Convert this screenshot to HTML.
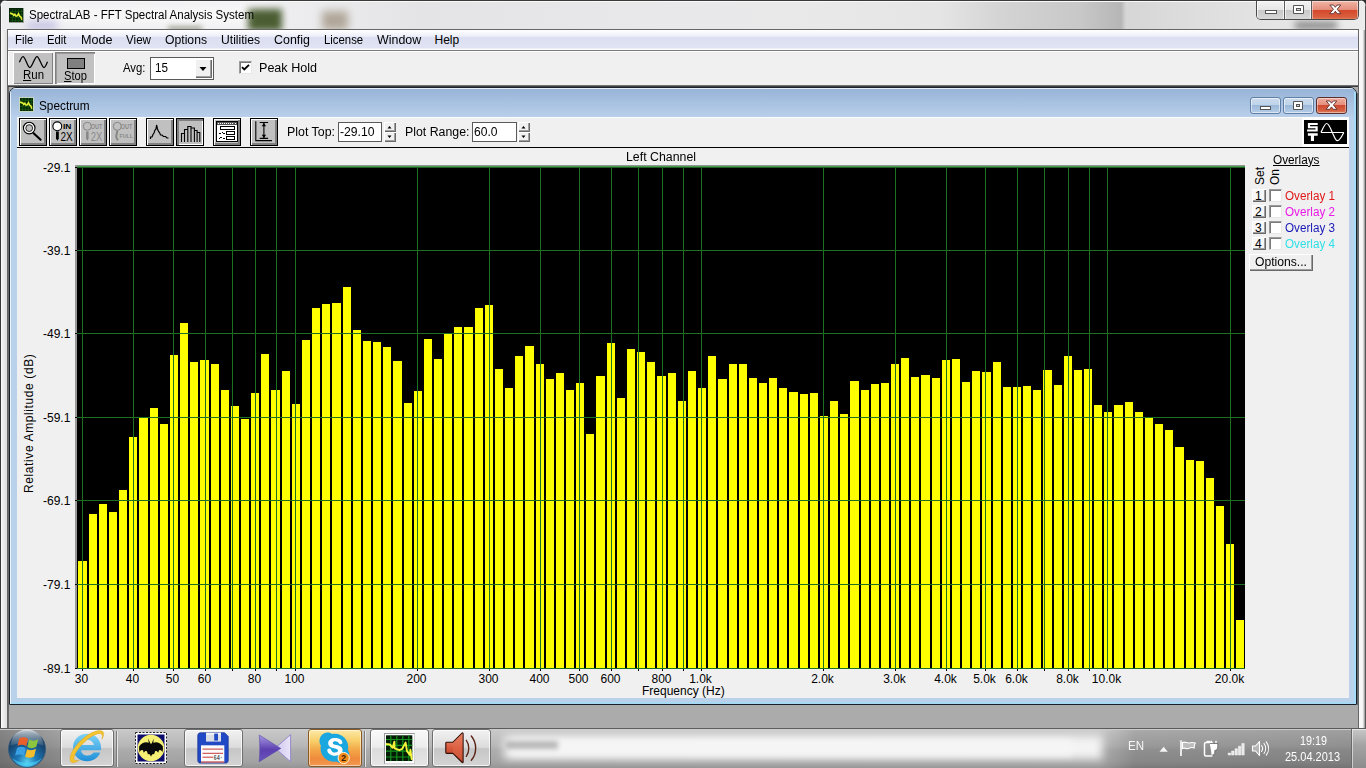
<!-- DOMAINTAG -->
<!DOCTYPE html>
<html><head><meta charset="utf-8"><title>SpectraLAB</title>
<style>
*{box-sizing:border-box;margin:0;padding:0}
html,body{width:1366px;height:768px;overflow:hidden;background:#ababab}
body{position:relative;font-family:"Liberation Sans",sans-serif;font-size:12px}
.abs{position:absolute;display:block}
.t{position:absolute;white-space:pre;transform-origin:0 0;font-family:"Liberation Sans",sans-serif}
.t u{text-decoration:underline;text-underline-offset:1px}
/* outer window */
#frame{left:0;top:0;width:1366px;height:728px;background:#e7e7e9;border-radius:7px 7px 0 0;overflow:hidden}
#glass{left:0;top:0;width:1366px;height:30px;background:linear-gradient(90deg,#ececee 0,#f0f0f2 250px,#e4e4e6 420px,#e8e8ea 640px,#e9e9ea 800px,#e5e5e6 940px,#d4d4d5 1000px,#c8c8c9 1080px,#b6b6b7 1121px,#d6d6d7 1126px,#dededf 1200px,#e6e6e7 1300px,#ececec 1366px)}
#client{left:8px;top:30px;width:1350px;height:698px;background:#ababab}
#menubar{left:8px;top:30px;width:1350px;height:19px;background:linear-gradient(180deg,#ffffff 0,#f4f5fb 20%,#e9ecf8 35%,#dbdff1 39%,#dfe3f3 92%,#eef0f8 95%)}
#toolbar{left:8px;top:51px;width:1350px;height:34px;background:#f0f0f0}
.btn{background:#c0c0c0}
.raised{box-shadow:inset 1px 1px 0 #fff, inset -1px -1px 0 #808080}
.sunken{box-shadow:inset 1px 1px 0 #808080, inset -1px -1px 0 #fff}
/* child window */
#child{left:9px;top:87px;width:1348px;height:618px;border:1px solid #1a2029;border-radius:7px 7px 1px 1px;background:#b9d1ea;overflow:hidden}
#ctitle{left:0;top:0;width:1346px;height:29px;background:linear-gradient(180deg,#96b3d6 0,#a7c1e0 50%,#b9cfea 100%)}
#cclient{left:17px;top:117px;width:1332px;height:581px;background:#f0f0f0;border-top:1px solid #fcfcfc}
.tb{width:29px;height:29px;border:1px solid #000;background:#c0c0c0}
.tb i{position:absolute;left:0;top:0;right:0;bottom:0;box-shadow:inset 1px 1px 0 #fff, inset -2px -2px 0 #808080;display:block}
.tb.down i{box-shadow:inset 2px 2px 0 #808080, inset -1px -1px 0 #fff}
.tb svg{position:absolute;left:0;top:0}
.edit{background:#fff;border:1px solid #5a5a5a}
.cb{width:13px;height:13px;background:#fff;border:1px solid #9a9a9a;border-right-color:#e8e8e8;border-bottom-color:#e8e8e8;box-shadow:inset 1px 1px 0 #7a7a7a}
.sb{background:#f0f0f0;box-shadow:inset 1px 1px 0 #fff, inset -1px -1px 0 #696969, inset -2px -2px 0 #a0a0a0}
/* taskbar */
#taskbar{left:0;top:728px;width:1366px;height:40px;background:linear-gradient(180deg,#5a5a5a 0,#5a5a5a 1px,#cdcdcd 1px,#c2c2c2 3px,#b0b0b0 45%,#a4a4a4 55%,#9a9a9a 85%,#8a8a8a 100%)}
.tbtn{top:729px;height:38px;border:1px solid #6f6f6f;border-radius:3px;background:linear-gradient(180deg,#f2f2f2 0,#dcdcdc 48%,#c6c6c6 52%,#d4d4d4 100%);box-shadow:inset 0 0 0 1px rgba(255,255,255,.75)}
</style></head><body>

<!-- OUTER WINDOW -->
<div class="abs" style="left:0;top:0;width:1366px;height:10px;background:#2e2e2e"></div>
<div id="frame" class="abs">
  <div id="glass" class="abs"></div>
  <!-- blurred desktop blobs behind glass -->
  <div class="abs" style="left:24px;top:5px;width:232px;height:20px;background:#fff;filter:blur(6px);opacity:.55"></div>
  <div class="abs" style="left:248px;top:9px;width:34px;height:22px;background:#2f4512;filter:blur(3.500px);opacity:.85"></div>
  <div class="abs" style="left:168px;top:26px;width:34px;height:5px;background:#5a5a40;filter:blur(2.500px);opacity:.5"></div>
  <div class="abs" style="left:322px;top:11px;width:26px;height:19px;background:#8a7a62;filter:blur(4px);opacity:.6"></div>
  <div class="abs" style="left:27px;top:21px;width:30px;height:9px;background:#8a86d0;filter:blur(4px);opacity:.45"></div>
  <div class="abs" style="left:1295px;top:22px;width:42px;height:7px;background:#555;filter:blur(3.500px);opacity:.7"></div>
  <!-- frame edges -->
  <div class="abs" style="left:0;top:0;width:1366px;height:1px;background:#3a3a3a"></div>
  <div class="abs" style="left:0;top:1px;width:1366px;height:1px;background:#fafafa"></div>
  <div class="abs" style="left:0;top:0;width:1px;height:728px;background:#3a3a3a"></div>
  <div class="abs" style="left:1px;top:4px;width:1px;height:724px;background:#fafafa"></div>
  <div class="abs" style="left:1365px;top:0;width:1px;height:728px;background:#555"></div>
  <div class="abs" style="left:1359px;top:30px;width:6px;height:698px;background:linear-gradient(90deg,#fafafa 0,#f4f4f4 4px,#d4d4d4 4px,#d4d4d4 5px,#a8a8a8 5px)"></div>
  <div class="abs" style="left:2px;top:30px;width:5px;height:698px;background:linear-gradient(90deg,#f2f2f2,#dedede)"></div>
  <!-- client border -->
  <div class="abs" style="left:7px;top:29px;width:1352px;height:699px;background:#666"></div>
</div>
<!-- title icon -->
<svg class="abs" style="left:9px;top:8px" width="15" height="15" viewBox="0 0 15 15"><rect width="15" height="15" fill="#9aa39a"/><rect x="0" y="0" width="14" height="14" fill="#062406"/><path d="M3.5 1v13M6.5 1v13M9.5 1v13M12.5 1v13M1 3.5h13M1 6.5h13M1 9.5h13M1 12.5h13" stroke="#1a5a16" stroke-width=".6"/><path d="M1 5l3 1.2 .8 1.3 1-1.2 1.3 1.8 1.2-.2 1.2-2.3 1.2 2.6 1.3 1 .8 2.6" fill="none" stroke="#e6f23a" stroke-width="1.5"/></svg>

<div id="client" class="abs"></div>
<div class="abs" style="left:8px;top:86px;width:1px;height:642px;background:#6a6a6a"></div>
<div id="menubar" class="abs"></div>
<div class="abs" style="left:8px;top:49px;width:1350px;height:1px;background:#fcfcfc"></div>
<div class="abs" style="left:8px;top:50px;width:1350px;height:1px;background:#7c7c7c"></div>
<div id="toolbar" class="abs"></div>
<div class="abs" style="left:8px;top:51px;width:1350px;height:1px;background:#fff"></div>
<div class="abs" style="left:8px;top:51px;width:1px;height:34px;background:#fff"></div>
<div class="abs" style="left:8px;top:85px;width:1350px;height:1px;background:#707070"></div>
<div class="abs" style="left:8px;top:86px;width:1350px;height:1px;background:#404040"></div>

<!-- caption buttons outer -->
<div class="abs" style="left:1256px;top:1px;width:103px;height:19px;border:1px solid #4a4a4a;border-top:none;border-radius:0 0 5px 5px;overflow:hidden;background:#ddd">
  <div class="abs" style="left:0;top:0;width:28px;height:19px;background:linear-gradient(180deg,#f3f3f3 0,#e6e6e6 45%,#c9c9c9 50%,#d9d9d9 100%);border-right:1px solid #5a5a5a;box-shadow:inset 0 0 0 1px rgba(255,255,255,.7)"></div>
  <div class="abs" style="left:28px;top:0;width:27px;height:19px;background:linear-gradient(180deg,#f3f3f3 0,#e6e6e6 45%,#c9c9c9 50%,#d9d9d9 100%);border-right:1px solid #5a5a5a;box-shadow:inset 0 0 0 1px rgba(255,255,255,.7)"></div>
  <div class="abs" style="left:55px;top:0;width:46px;height:19px;background:linear-gradient(180deg,#f0b5a6 0,#e58e7b 45%,#d4482c 50%,#d9603f 85%,#e58a66 100%);box-shadow:inset 0 0 0 1px rgba(255,255,255,.45)"></div>
  <svg class="abs" style="left:0;top:-1px" width="101" height="19" viewBox="0 0 101 19">
    <rect x="8.5" y="10.5" width="11" height="3" fill="#fff" stroke="#555" stroke-width="1"/>
    <path d="M36.5 5.5h10v8h-10z" fill="#fff" stroke="#555"/><rect x="39.5" y="8.5" width="4" height="2" fill="#d8d8d8" stroke="#555"/>
    <path d="M72.8 5h3.8l1.700 2.300 1.700-2.300h3.800l-3.600 4.200 3.800 4.500h-3.900l-1.800-2.500-1.800 2.500h-3.900l3.800-4.500z" fill="#fff" stroke="#5e2f2a" stroke-width=".9"/>
  </svg>
</div>

<!-- main toolbar: Run / Stop -->
<div class="abs btn raised" style="left:13px;top:52px;width:40px;height:32px"></div>
<svg class="abs" style="left:13px;top:52px" width="40" height="32" viewBox="0 0 40 32"><path d="M6.400 10.300C7.600 7.300 8.800 4.500 10 4.500 12.300 4.500 14.500 15.500 16.800 15.500 19.200 15.500 21.600 4.500 24 4.500 26.300 4.500 28.700 15.500 31 15.500 32.200 15.500 33.400 12.600 34.500 9.800" fill="none" stroke="#000" stroke-width="1.250"/></svg>
<div class="abs btn" style="left:55px;top:52px;width:40px;height:32px;box-shadow:inset 1px 1px 0 #808080, inset 2px 2px 0 #9a9a9a, inset -1px -1px 0 #fff"></div>
<div class="abs" style="left:67px;top:58px;width:18px;height:11px;background:#808080;border:1px solid #000"></div>

<!-- Avg combo -->
<div class="abs edit" style="left:150px;top:57px;width:64px;height:23px"></div>
<div class="abs" style="left:195px;top:59px;width:17px;height:19px;background:#f0f0f0;box-shadow:inset 1px 1px 0 #fff, inset -1px -1px 0 #696969, inset -2px -2px 0 #a0a0a0"></div>
<svg class="abs" style="left:195px;top:59px" width="17" height="19"><path d="M4.5 8h7l-3.5 4z" fill="#000"/></svg>
<!-- Peak hold checkbox -->
<div class="abs cb" style="left:239px;top:61px"></div>
<svg class="abs" style="left:239px;top:61px" width="13" height="13"><path d="M3 6.2l2.3 2.3L10 3.8" fill="none" stroke="#000" stroke-width="1.9"/></svg>

<!-- CHILD WINDOW -->
<div id="child" class="abs">
  <div id="ctitle" class="abs"></div>
  <div class="abs" style="left:0;top:0;width:1346px;height:1px;background:rgba(255,255,255,.75)"></div>
  <div class="abs" style="left:0;top:0;width:1px;height:616px;background:rgba(255,255,255,.75)"></div>
  <div class="abs" style="left:1344px;top:4px;width:2px;height:612px;background:#a6dcf8"></div>
  <div class="abs" style="left:1px;top:614px;width:1345px;height:2px;background:#a6d8f4"></div>
</div>
<!-- child caption buttons -->
<div class="abs" style="left:1250px;top:97px;width:31px;height:17px;border:1px solid #5f7fa6;border-radius:3px;background:linear-gradient(180deg,#cddcee 0,#bfd3ea 45%,#9db9da 50%,#b4cce6 100%);box-shadow:inset 0 0 0 1px rgba(255,255,255,.55)"></div>
<div class="abs" style="left:1283px;top:97px;width:31px;height:17px;border:1px solid #5f7fa6;border-radius:3px;background:linear-gradient(180deg,#cddcee 0,#bfd3ea 45%,#9db9da 50%,#b4cce6 100%);box-shadow:inset 0 0 0 1px rgba(255,255,255,.55)"></div>
<div class="abs" style="left:1316px;top:97px;width:31px;height:17px;border:1px solid #5b2f2f;border-radius:3px;background:linear-gradient(180deg,#efaea0 0,#e48f7e 45%,#cf4a30 50%,#d46243 85%,#e08a68 100%);box-shadow:inset 0 0 0 1px rgba(255,255,255,.4)"></div>
<svg class="abs" style="left:1250px;top:97px" width="97" height="17" viewBox="0 0 97 17">
  <rect x="10.5" y="9.5" width="10" height="3" fill="#fff" stroke="#555"/>
  <path d="M43.5 4.500h9v8h-9z" fill="#fff" stroke="#555"/><rect x="46.500" y="7.500" width="3" height="2" fill="#ccd" stroke="#555"/>
  <path d="M76.200 4h3.600l1.700 2.200 1.700-2.200h3.600l-3.400 4 3.600 4.300h-3.700l-1.800-2.400-1.800 2.400h-3.700l3.600-4.300z" fill="#fff" stroke="#5e2f2a" stroke-width=".9"/>
</svg>
<!-- child icon -->
<svg class="abs" style="left:19px;top:97px" width="15" height="15" viewBox="0 0 15 15"><rect width="15" height="15" fill="#c7d6c0"/><rect x="1" y="1" width="13" height="13" fill="#082d06"/><path d="M3.5 1v13M6.5 1v13M9.5 1v13M12.5 1v13M1 3.500h13M1 6.500h13M1 9.500h13M1 12.500h13" stroke="#1a5a16" stroke-width=".6"/><path d="M1 5l3 1.200 .8 1.300 1-1.200 1.300 1.800 1.200-.2 1.200-2.300 1.200 2.600 1.300 1 .8 2.600" fill="none" stroke="#e6f23a" stroke-width="1.500"/></svg>

<div class="abs" style="left:1357px;top:93px;width:1px;height:612px;background:#62676e"></div>
<div id="cclient" class="abs"></div>
<div class="abs" style="left:17px;top:147px;width:1332px;height:1px;background:#000"></div>

<!-- child toolbar buttons -->
<div class="abs tb" style="left:19px;top:118px;width:28px;height:28px"><i></i>
<svg width="26" height="26" viewBox="1 1 26 26"><circle cx="10.200" cy="10.100" r="5.800" fill="#d8d8d8" stroke="#000" stroke-width="1.100"/><circle cx="10.200" cy="10.100" r="4.300" fill="none" stroke="#fff" stroke-width="1.200"/><circle cx="10.200" cy="10.100" r="3.400" fill="#c0c0c0" stroke="#000" stroke-width=".8"/><path d="M14.600 15.200l7 6.500" stroke="#000" stroke-width="2.100" stroke-linecap="round"/></svg></div>
<div class="abs tb" style="left:49px;top:118px;width:28px;height:28px"><i></i>
<svg width="26" height="26" viewBox="1 1 26 26"><circle cx="8.300" cy="8.300" r="4.400" fill="#fff" stroke="#000" stroke-width="1.100"/><path d="M7 13.500h2.800v7l-1.400 2.200-1.400-2.200z" fill="#000"/><text x="14" y="11.200" font-family="Liberation Sans" font-size="6.500" font-weight="700" fill="#000" textLength="8.500" lengthAdjust="spacingAndGlyphs">IN</text><text x="11.500" y="23" font-family="Liberation Sans" font-size="12.500" fill="#000" textLength="12.200" lengthAdjust="spacingAndGlyphs">2X</text></svg></div>
<div class="abs tb" style="left:79px;top:118px;width:28px;height:28px"><i></i>
<svg width="26" height="26" viewBox="1 1 26 26"><circle cx="8.300" cy="8.300" r="4" fill="none" stroke="#868686" stroke-width="1"/><path d="M7.100 13.500h2.500v7l-1.250 2.200-1.250-2.200z" fill="#868686"/><text x="11.800" y="11.200" font-family="Liberation Sans" font-size="6.500" font-weight="700" fill="#8a8a8a" textLength="11.500" lengthAdjust="spacingAndGlyphs">OUT</text><text x="11.800" y="23" font-family="Liberation Sans" font-size="12.500" fill="#8a8a8a" textLength="11.500" lengthAdjust="spacingAndGlyphs">2X</text></svg></div>
<div class="abs tb" style="left:109px;top:118px;width:28px;height:28px"><i></i>
<svg width="26" height="26" viewBox="1 1 26 26"><circle cx="8.300" cy="8.300" r="4" fill="none" stroke="#868686" stroke-width="1"/><path d="M8.300 12.500c0 3-1.300 4-1 6.500.2 1.500 1 2.500 1.800 3.200" fill="none" stroke="#868686" stroke-width="2"/><text x="11.800" y="11.200" font-family="Liberation Sans" font-size="6.500" font-weight="700" fill="#8a8a8a" textLength="11.500" lengthAdjust="spacingAndGlyphs">OUT</text><text x="10.500" y="20" font-family="Liberation Sans" font-size="6.200" font-weight="700" fill="#8a8a8a" textLength="13.500" lengthAdjust="spacingAndGlyphs">FULL</text></svg></div>
<div class="abs tb" style="left:146px;top:118px;width:28px;height:28px"><i></i>
<svg width="26" height="26" viewBox="1 1 26 26"><path d="M4.500 21v-2h1.500l1-2.500 1-1.500 1-3 1-1 .6-4 .9 4 1 2.500 1 1 1 2.500h1.500l1.500 1.500h2l1.500 1.500h1.500" fill="none" stroke="#000" stroke-width="1.200"/></svg></div>
<div class="abs tb down" style="left:176px;top:118px;width:28px;height:28px"><i></i>
<svg width="26" height="26" viewBox="1 1 26 26"><path d="M5.500 24v-8.500h3v8.500M8.500 15.500v-4h3.300v12.500M11.800 11.500v-3h3.200v15.500M15 10h3.400v14M18.400 12.500h2.700v11.500M21.100 14.500h2.700v9.500" fill="none" stroke="#000" stroke-width="1.100"/></svg></div>
<div class="abs tb" style="left:213px;top:118px;width:28px;height:28px"><i></i>
<svg width="26" height="26" viewBox="1 1 26 26" shape-rendering="crispEdges"><rect x="3.500" y="3.500" width="21" height="20" fill="#fff" stroke="#000"/><rect x="4" y="4" width="20" height="2.500" fill="#555"/><path d="M5 5h1M7 5h1M9 5h1M11 5h1M13 5h1M15 5h1M17 5h1M19 5h1M22 5h1" stroke="#fff"/><rect x="7.500" y="8.500" width="14" height="3" fill="#fff" stroke="#000"/><rect x="13.500" y="13.500" width="8" height="3" fill="#fff" stroke="#000"/><rect x="13.500" y="18.500" width="8" height="3" fill="#fff" stroke="#000"/><path d="M6 15h2M9 14h1M10 15h2M6 20h1M7 19h2M10 20h2" stroke="#000"/></svg></div>
<div class="abs tb" style="left:250px;top:118px;width:28px;height:28px"><i></i>
<svg width="26" height="26" viewBox="1 1 26 26"><path d="M5.800 3.300v19.300h16.200" fill="none" stroke="#000" stroke-width="1.100"/><path d="M9.700 4.500h8.400M9.700 20.400h8.400M13.900 5v15" fill="none" stroke="#000" stroke-width="1.100"/><path d="M13.900 5l-2.200 3.300h4.400zM13.900 20l-2.200-3.300h4.400z" fill="#000"/></svg></div>

<!-- Plot Top / Plot Range controls -->
<div class="abs edit" style="left:338px;top:122px;width:44px;height:20px"></div>
<div class="abs sb" style="left:384px;top:122px;width:12px;height:10px"></div>
<div class="abs sb" style="left:384px;top:132px;width:12px;height:10px"></div>
<svg class="abs" style="left:384px;top:122px" width="12" height="20"><path d="M3.500 6.500h4l-2-2.500zM3.500 13.500h4l-2 2.500z" fill="#000"/></svg>
<div class="abs edit" style="left:472px;top:122px;width:45px;height:20px"></div>
<div class="abs sb" style="left:518px;top:122px;width:12px;height:10px"></div>
<div class="abs sb" style="left:518px;top:132px;width:12px;height:10px"></div>
<svg class="abs" style="left:518px;top:122px" width="12" height="20"><path d="M3.500 6.500h4l-2-2.500zM3.500 13.500h4l-2 2.500z" fill="#000"/></svg>

<!-- logo -->
<div class="abs" style="left:1302px;top:118px;width:47px;height:29px;background:#fdfdfd"></div>
<svg class="abs" style="left:1304px;top:120px" width="43" height="24" viewBox="0 0 43 24"><rect width="43" height="24" fill="#000"/>
<path d="M4.400 3h9.300v2h-9.300zM3.900 3h2.200v5.300h-2.200zM3.900 6.300h9.800v2h-9.800zM11.500 6.300h2.200v5.200h-2.200zM3.100 9.500h10.600v2h-10.600zM3.900 13.200h9.800v2.600h-9.800zM6.900 13.200h3.100v7.800h-3.100z" fill="#fff"/>
<path d="M17 12.500H39.800" stroke="#fff" stroke-width="1"/>
<path d="M17 12.400C19 8.400 20.800 3.500 22.600 3.500 25 3.500 26.500 8.800 28.300 12.400 30 15.800 31.500 20.700 33.400 20.700 35.500 20.700 37.800 16.400 39.800 12.400" fill="none" stroke="#fff" stroke-width="1.200"/></svg>

<svg class=abs style="left:72px;top:165px" width="1174" height="507" viewBox="72 165 1174 507" shape-rendering="crispEdges"><rect x="75" y="165" width="1170" height="1" fill="#8f968f"/><rect x="75" y="165" width="2" height="504" fill="#999"/><rect x="77" y="166" width="1168" height="503" fill="#000"/><path d="M78 561H87V668H78ZM89 514H97V668H89ZM99 504H107V668H99ZM109 512H117V668H109ZM119 490H127V668H119ZM129 437H137V668H129ZM139 418H148V668H139ZM150 408H158V668H150ZM160 424H168V668H160ZM170 355H178V668H170ZM180 323H188V668H180ZM190 362H198V668H190ZM200 360H209V668H200ZM211 364H219V668H211ZM221 390H229V668H221ZM231 406H239V668H231ZM241 419H249V668H241ZM251 393H259V668H251ZM261 354H269V668H261ZM271 390H280V668H271ZM282 371H290V668H282ZM292 404H300V668H292ZM302 340H310V668H302ZM312 308H320V668H312ZM322 304H330V668H322ZM332 303H341V668H332ZM343 287H351V668H343ZM353 330H361V668H353ZM363 341H371V668H363ZM373 342H381V668H373ZM383 347H391V668H383ZM393 361H402V668H393ZM404 403H412V668H404ZM414 391H422V668H414ZM424 339H432V668H424ZM434 359H442V668H434ZM444 334H452V668H444ZM454 327H462V668H454ZM464 327H473V668H464ZM475 308H483V668H475ZM485 305H493V668H485ZM495 369H503V668H495ZM505 388H513V668H505ZM515 356H523V668H515ZM525 346H534V668H525ZM536 364H544V668H536ZM546 379H554V668H546ZM556 373H564V668H556ZM566 390H574V668H566ZM576 383H584V668H576ZM586 434H594V668H586ZM596 376H605V668H596ZM607 343H615V668H607ZM617 398H625V668H617ZM627 349H635V668H627ZM637 352H645V668H637ZM647 362H655V668H647ZM657 376H666V668H657ZM668 373H676V668H668ZM678 401H686V668H678ZM688 371H696V668H688ZM698 388H706V668H698ZM708 356H716V668H708ZM718 379H727V668H718ZM729 364H737V668H729ZM739 364H747V668H739ZM749 378H757V668H749ZM759 383H767V668H759ZM769 378H777V668H769ZM779 388H787V668H779ZM789 392H798V668H789ZM800 394H808V668H800ZM810 393H818V668H810ZM820 416H828V668H820ZM830 401H838V668H830ZM840 414H848V668H840ZM850 381H859V668H850ZM861 390H869V668H861ZM871 384H879V668H871ZM881 383H889V668H881ZM891 364H899V668H891ZM901 358H909V668H901ZM911 377H919V668H911ZM921 375H930V668H921ZM932 378H940V668H932ZM942 360H950V668H942ZM952 359H960V668H952ZM962 382H970V668H962ZM972 371H980V668H972ZM982 372H991V668H982ZM993 362H1001V668H993ZM1003 387H1011V668H1003ZM1013 387H1021V668H1013ZM1023 386H1031V668H1023ZM1033 390H1041V668H1033ZM1043 370H1052V668H1043ZM1054 385H1062V668H1054ZM1064 356H1072V668H1064ZM1074 370H1082V668H1074ZM1084 369H1092V668H1084ZM1094 405H1102V668H1094ZM1104 412H1112V668H1104ZM1114 405H1123V668H1114ZM1125 402H1133V668H1125ZM1135 412H1143V668H1135ZM1145 418H1153V668H1145ZM1155 424H1163V668H1155ZM1165 430H1173V668H1165ZM1175 447H1184V668H1175ZM1186 460H1194V668H1186ZM1196 461H1204V668H1196ZM1206 478H1214V668H1206ZM1216 506H1224V668H1216ZM1226 544H1234V668H1226ZM1236 620H1244V668H1236Z" fill="#ffff00"/><path d="M82 167h1v502h-1zM133 167h1v502h-1zM173 167h1v502h-1zM205 167h1v502h-1zM232 167h1v502h-1zM255 167h1v502h-1zM276 167h1v502h-1zM295 167h1v502h-1zM417 167h1v502h-1zM489 167h1v502h-1zM540 167h1v502h-1zM579 167h1v502h-1zM611 167h1v502h-1zM638 167h1v502h-1zM662 167h1v502h-1zM683 167h1v502h-1zM701 167h1v502h-1zM823 167h1v502h-1zM895 167h1v502h-1zM946 167h1v502h-1zM985 167h1v502h-1zM1017 167h1v502h-1zM1044 167h1v502h-1zM1068 167h1v502h-1zM1089 167h1v502h-1zM1107 167h1v502h-1zM1230 167h1v502h-1zM77 250h1168v1h-1168zM77 333h1168v1h-1168zM77 417h1168v1h-1168zM77 500h1168v1h-1168zM77 584h1168v1h-1168zM77 668h1168v1h-1168z" fill="#1d6f22"/><rect x="77" y="166" width="1168" height="1" fill="#4c9c50"/><rect x="77" y="167" width="1168" height="1" fill="#1f5f25"/><path d="M75 167h2v1h-2zM75 250h2v1h-2zM75 333h2v1h-2zM75 417h2v1h-2zM75 500h2v1h-2zM75 584h2v1h-2zM75 668h2v1h-2zM82 669h1v2h-1zM133 669h1v2h-1zM173 669h1v2h-1zM205 669h1v2h-1zM232 669h1v2h-1zM255 669h1v2h-1zM276 669h1v2h-1zM295 669h1v2h-1zM417 669h1v2h-1zM489 669h1v2h-1zM540 669h1v2h-1zM579 669h1v2h-1zM611 669h1v2h-1zM638 669h1v2h-1zM662 669h1v2h-1zM683 669h1v2h-1zM701 669h1v2h-1zM823 669h1v2h-1zM895 669h1v2h-1zM946 669h1v2h-1zM985 669h1v2h-1zM1017 669h1v2h-1zM1044 669h1v2h-1zM1068 669h1v2h-1zM1089 669h1v2h-1zM1107 669h1v2h-1zM1230 669h1v2h-1z" fill="#000"/></svg>
<!-- overlay set buttons + checkboxes -->
<div class="abs" style="left:1252px;top:189px;width:14px;height:13px;background:#f7f7f7;box-shadow:inset 1px 1px 0 #fff, inset -1px -1px 0 #696969, inset -2px -2px 0 #a0a0a0"></div>
<div class="abs" style="left:1252px;top:205px;width:14px;height:13px;background:#f7f7f7;box-shadow:inset 1px 1px 0 #fff, inset -1px -1px 0 #696969, inset -2px -2px 0 #a0a0a0"></div>
<div class="abs" style="left:1252px;top:221px;width:14px;height:13px;background:#f7f7f7;box-shadow:inset 1px 1px 0 #fff, inset -1px -1px 0 #696969, inset -2px -2px 0 #a0a0a0"></div>
<div class="abs" style="left:1252px;top:237px;width:14px;height:13px;background:#f7f7f7;box-shadow:inset 1px 1px 0 #fff, inset -1px -1px 0 #696969, inset -2px -2px 0 #a0a0a0"></div>
<div class="abs cb" style="left:1269px;top:189px"></div>
<div class="abs cb" style="left:1269px;top:205px"></div>
<div class="abs cb" style="left:1269px;top:221px"></div>
<div class="abs cb" style="left:1269px;top:237px"></div>
<div class="abs" style="left:1249px;top:254px;width:64px;height:17px;background:#f0f0f0;box-shadow:inset 1px 1px 0 #fff, inset -1px -1px 0 #696969, inset -2px -2px 0 #a0a0a0"></div>

<!-- TASKBAR -->
<div id="taskbar" class="abs"></div>
<div class="abs" style="left:0;top:730px;width:1366px;height:38px;background:linear-gradient(90deg,rgba(70,70,70,.5) 0,rgba(90,90,90,.32) 56px,rgba(255,255,255,.08) 120px,rgba(255,255,255,.1) 490px,rgba(255,255,255,.12) 1100px,rgba(50,50,50,.18) 1135px,rgba(40,40,40,.24) 1366px)"></div>
<div class="abs" style="left:0;top:728px;width:1366px;height:40px;overflow:hidden"><div class="abs" style="left:504px;top:8px;width:598px;height:23px;background:#f3f3f3;filter:blur(4.500px)"></div>
<div class="abs" style="left:512px;top:11px;width:560px;height:17px;background:#f6f6f6;filter:blur(3px);opacity:.8"></div></div>
<div class="abs" style="left:506px;top:741px;width:52px;height:8px;background:#7c7c7c;filter:blur(2.500px);opacity:.5"></div>
<!-- buttons -->
<div class="abs tbtn" style="left:60px;width:54px"></div>
<div class="abs" style="left:116px;top:731px;width:1px;height:36px;background:#7a7a7a"></div><div class="abs" style="left:117px;top:731px;width:1px;height:36px;background:#e6e6e6"></div>
<div class="abs tbtn" style="left:184px;width:59px"></div>
<div class="abs tbtn" style="left:308px;width:54px;border-color:#8a5a22;background:linear-gradient(180deg,#fbe9a8 0,#f8cf6a 30%,#f3a748 55%,#ee8a3c 80%,#f19a55 100%);box-shadow:inset 0 0 0 1px rgba(255,255,255,.5)"></div>
<div class="abs" style="left:364px;top:731px;width:1px;height:36px;background:#7a7a7a"></div><div class="abs" style="left:365px;top:731px;width:1px;height:36px;background:#e6e6e6"></div>
<div class="abs tbtn" style="left:370px;width:59px;background:linear-gradient(180deg,#fafafa 0,#ececec 48%,#dcdcdc 52%,#e6e6e6 100%)"></div>
<div class="abs tbtn" style="left:432px;width:59px"></div>
<!-- start orb -->
<svg class="abs" style="left:6px;top:728px" width="44" height="40" viewBox="0 0 44 40">
<defs><radialGradient id="og" cx="50%" cy="85%" r="75%"><stop offset="0" stop-color="#58d0ee"/><stop offset=".35" stop-color="#1e78b8"/><stop offset=".8" stop-color="#15456f"/><stop offset="1" stop-color="#0e2f4f"/></radialGradient>
<linearGradient id="oh" x1="0" y1="0" x2="0" y2="1"><stop offset="0" stop-color="#fff" stop-opacity=".75"/><stop offset="1" stop-color="#fff" stop-opacity=".08"/></linearGradient></defs>
<circle cx="21" cy="21" r="18.500" fill="url(#og)" stroke="#3a5d7c" stroke-width="1"/>
<path d="M4.500 18a16.500 16.500 0 0 1 33 0c-8-4-25-4-33 0z" fill="url(#oh)"/>
<path d="M13.200 10.500c3-1.600 6-1.500 8.800.3l-1.700 7.400c-2.800-1.800-5.800-1.900-8.800-.3z" fill="#e8602a"/>
<path d="M23.200 11.600c2.900 1.500 5.900 1.500 9-.4l-1.900 7.600c-3.100 1.800-6.100 1.800-9 .3z" fill="#8cc63e"/>
<path d="M11 20c3-1.600 6-1.500 8.800.3l-1.800 7.600c-2.800-1.800-5.800-1.900-8.800-.3z" fill="#3aa0e4"/>
<path d="M21 21.200c2.900 1.500 5.900 1.500 9-.4l-1.900 7.600c-3.100 1.800-6.100 1.800-9 .3z" fill="#f6bd2c"/>
<path d="M6 30a17.500 17.500 0 0 0 30 0c-8 6.500-22 6.500-30 0z" fill="#4fe0ff" opacity=".55"/>
</svg>
<!-- IE -->
<svg class="abs" style="left:70px;top:731px;overflow:visible" width="34" height="34" viewBox="0 0 34 34">
<defs><linearGradient id="ie" x1="0" y1="0" x2="0" y2="1"><stop offset="0" stop-color="#7fd4f7"/><stop offset="1" stop-color="#1f8fd8"/></linearGradient></defs>
<g transform="translate(17 16.500) scale(1.270) translate(-17.400 -17.400)"><path d="M17.500 6.500c6.500 0 11 4.800 11 11.300v1.700h-15.800c.4 2.600 2.400 4.200 5.200 4.200 2 0 3.600-.8 4.600-2.300h5.300c-1.500 4.200-5.300 6.800-10.200 6.800-6.600 0-11.200-4.500-11.200-10.800 0-6.300 4.600-10.900 11.100-10.900zm-4.700 9h10.100c-.4-2.500-2.300-4.100-5-4.100s-4.600 1.600-5.100 4.100z" fill="url(#ie)"/>
<path d="M5 29c-3-3 1-11 8-17.500 6-5.500 13.500-8.800 16.500-6.800 1.600 1.100 1.200 3.500-.3 6.100.6-2 .5-3.500-.6-4.100-2.200-1.300-8.400 1.800-13.600 6.800-5.600 5.400-9 11.500-7.600 13.600.6.900 2.100.8 3.900.1-2.600 1.900-5 2.800-6.300 1.800z" fill="#f4c430" stroke="#d9a520" stroke-width=".4"/></g>
</svg>
<!-- The Bat -->
<svg class="abs" style="left:135px;top:732px" width="32" height="32" viewBox="0 0 32 32">
<rect x=".5" y=".5" width="31" height="31" fill="#fff" stroke="#222" stroke-width="1" stroke-dasharray="2 1.500"/>
<rect x="2.500" y="2.500" width="27" height="27" fill="#0c0c6c"/>
<ellipse cx="16" cy="16" rx="13.400" ry="13.200" fill="#f6f074"/>
<path d="M16 12.300L14.800 10.200 13.300 6.500 13.700 10.700C11 9.500 7 10 4.200 14.200 3.900 16 4 18 4.500 20.200 5.500 18.200 7 17.500 8 18.500L8.800 20.800C9.800 19 11 18.600 12 19.500L13 22.500C14 21.500 15 22 16 24.800 17 22 18 21.500 19 22.500L20 19.500C21 18.600 22.200 19 23.200 20.800L24 18.500C25 17.500 26.500 18.200 27.500 20.200 28 18 28.100 16 27.800 14.200 25 10 21 9.500 18.300 10.700L18.700 6.500 17.200 10.200z" fill="#0a0a0a"/>
</svg>
<!-- floppy -->
<svg class="abs" style="left:197px;top:732px" width="32" height="32" viewBox="0 0 32 32">
<path d="M.8 3.500c0-1.500 1.100-2.700 2.600-2.700h24.200l3.600 3.600v24c0 1.500-1.100 2.700-2.600 2.700h-25.200c-1.500 0-2.600-1.200-2.600-2.700z" fill="#2149c6" stroke="#1a3596" stroke-width=".8"/>
<rect x="9" y=".8" width="15" height="8.800" fill="#d9dde6"/><rect x="9" y=".8" width="15" height="2" fill="#f2f2f5"/><rect x="17.200" y="1.600" width="3.800" height="7" fill="#2149c6"/>
<rect x="4" y="13.300" width="23.300" height="17.200" fill="#fbfbfb"/>
<path d="M5.500 17.100h20.500M5.500 21.300h20.500M5.500 25.200h10.500" stroke="#c83a3a" stroke-width="1"/><path d="M4 30h23.300" stroke="#c04040" stroke-width="1.200"/>
<text x="16.500" y="27.600" font-family="Liberation Mono" font-size="6.500" font-weight="700" fill="#555" textLength="9.500" lengthAdjust="spacingAndGlyphs">64·</text>
</svg>
<!-- VS -->
<svg class="abs" style="left:257px;top:733px" width="36" height="30" viewBox="0 0 36 30">
<defs><linearGradient id="vs1" x1="0" y1="0" x2="0" y2="1"><stop offset="0" stop-color="#a899e2"/><stop offset=".55" stop-color="#5c3fb0"/><stop offset="1" stop-color="#6a55bc"/></linearGradient><linearGradient id="vs2" x1="0" y1="0" x2="1" y2="0"><stop offset="0" stop-color="#cfc6ee"/><stop offset="1" stop-color="#e9e4f8"/></linearGradient></defs>
<path d="M33.600 1.600v27.100l-15.500-13.500z" fill="url(#vs2)" stroke="#8f82c8" stroke-width=".9" stroke-linejoin="round"/>
<path d="M2.200 2c0 0 .6 7 .6 13.400s-.6 13.300-.6 13.300l21.600-13.300z" fill="url(#vs1)" stroke="#5a48a8" stroke-width=".6" stroke-linejoin="round"/>
</svg>
<!-- Skype -->
<svg class="abs" style="left:318px;top:731px" width="34" height="34" viewBox="0 0 34 34">
<path d="M9.500 1.500c2 0 3.600.6 4.800 1.500 1-.2 2-.3 3-.2 7.400.3 13.200 6.300 12.900 13.600 0 .9-.2 1.800-.4 2.600.9 1.300 1.500 2.900 1.500 4.700 0 4.600-3.700 8.300-8.300 8.300-1.700 0-3.300-.5-4.600-1.400-.9.200-1.900.2-2.900.2-7.400-.3-13.200-6.400-12.900-13.700 0-.8.100-1.700.3-2.500-.9-1.300-1.400-2.900-1.400-4.600 0-4.700 3.500-8.500 8-8.500z" fill="#1aa7e0"/>
<path d="M17.200 7c-4.200 0-7 2-7 5.200 0 3.300 2.700 4.300 6 5 2.700.6 3.800 1 3.800 2.300 0 1.200-1.200 2-3 2-2 0-3.200-.9-3.900-2.600-.4-.9-1-1.400-1.900-1.400-1.100 0-1.900.8-1.900 1.800 0 2.800 3.300 5.500 7.800 5.500 4.400 0 7.500-2.100 7.500-5.700 0-3.200-2.300-4.400-6.200-5.200-2.600-.5-3.600-.9-3.600-2 0-1 1-1.700 2.600-1.700 1.700 0 2.600.7 3.300 1.900.5.800 1 1.200 1.900 1.200 1 0 1.800-.8 1.800-1.700 0-2.400-3-4.600-7.200-4.600z" fill="#fff"/>
<circle cx="25.700" cy="27" r="5.600" fill="#f08a1c" stroke="#fff3d0" stroke-width="1"/>
<text x="25.700" y="30.300" text-anchor="middle" font-family="Liberation Sans" font-size="8.500" font-weight="700" fill="#3a1a00">2</text>
</svg>
<!-- SpectraLAB task icon -->
<svg class="abs" style="left:384px;top:733px" width="31" height="31" viewBox="0 0 31 31">
<rect width="31" height="31" fill="#fdfdfd"/><path d="M0 31V0h31" fill="none" stroke="#9a9a9a" stroke-width="2"/><path d="M31 0v31H0" fill="none" stroke="#b8b8b8" stroke-width="1.200"/>
<rect x="2" y="2.300" width="26.300" height="25.700" fill="#021a06"/>
<path d="M6.800 2.300v25.700M12.800 2.300v25.700M18.800 2.300v25.700M24.800 2.300v25.700M2 6.500h26.300M2 12.300h26.300M2 18.200h26.300M2 24h26.300" stroke="#15921d" stroke-width="1.200"/>
<path d="M2 11l3.800.5 2.900 3.300 1.700-6.200.2 6.700 4.800 1.900 2.800-1.400 3.400-6.200 1.400 8.600 2.900 3.800.5-5.200 1.400 10" fill="none" stroke="#f4f43c" stroke-width="1.900" stroke-linejoin="round"/>
</svg>
<!-- speaker -->
<svg class="abs" style="left:445px;top:732px" width="34" height="32" viewBox="0 0 34 32">
<defs><linearGradient id="sp" x1="0" y1="0" x2="0" y2="1"><stop offset="0" stop-color="#f0a088"/><stop offset=".5" stop-color="#d8583c"/><stop offset="1" stop-color="#a83420"/></linearGradient></defs>
<path d="M1.700 10.200h6.300l9-9c.6-.5 1.100-.3 1.100.5v28.200c0 .8-.5 1-1.100.5l-9-9h-6.300c-.5 0-.9-.4-.9-.9v-9.400c0-.5.400-.9.900-.9z" fill="url(#sp)" stroke="#2e0e06" stroke-width="1.100" stroke-linejoin="round"/>
<path d="M8 10.500l9.300-9v27.500l-9.300-8.300z" fill="#e06a48" opacity=".55"/>
<path d="M21.300 8.300c3.300 4.300 3.300 11.800 0 16.100" fill="none" stroke="#5a2214" stroke-width="1.300" stroke-linecap="round"/>
<path d="M26.300 4c5.800 7 5.800 17.300 0 24.300" fill="none" stroke="#5a2214" stroke-width="1.400" stroke-linecap="round"/>
</svg>
<!-- tray -->
<svg class="abs" style="left:1155px;top:738px" width="120" height="22" viewBox="1155 738 120 22">
<path d="M1159.500 751.700h8.300l-4.150-5z" fill="#fff" opacity=".9"/>
<!-- flag -->
<path d="M1181 741.500v14.500" stroke="#fff" stroke-width="1.600"/><path d="M1179.700 741h2.600" stroke="#fff" stroke-width="1"/>
<path d="M1182.500 742.500c3-1.500 5 1.500 8 .3 1.500-.6 3-.3 4.800.2-1 1.500-1.400 3.200-1.200 5-2-.8-3.500-.5-5 .3-2.500 1.200-4.300-1-6.600.2z" fill="rgba(255,255,255,.35)" stroke="#fff" stroke-width="1.100"/>
<!-- power -->
<rect x="1204.500" y="742.500" width="8" height="13.500" rx="1.500" fill="none" stroke="#fff" stroke-width="1.500"/>
<rect x="1206.500" y="740.800" width="4" height="2" fill="#fff"/>
<path d="M1211.500 743v-2.200M1216 743v-2.200" stroke="#fff" stroke-width="1.400"/>
<path d="M1209.800 743.500h8v3.500c0 2-1.500 3.300-3 3.500v2.500c0 1.200-1.500 2.200-3 2.200" fill="#fff" stroke="#555" stroke-width=".7"/>
<!-- network -->
<path d="M1228.200 753h2.400v2h-2.400zM1231.600 751h2.400v4h-2.400zM1235 748.700h2.400v6.300h-2.400zM1238.400 746.200h2.400v8.800h-2.400zM1241.800 743.500h2.400v11.500h-2.400z" fill="rgba(255,255,255,.8)" stroke="#fff" stroke-width=".5"/>
<!-- volume -->
<path d="M1252.500 746h3l4-4.500v14l-4-4.500h-3z" fill="rgba(255,255,255,.35)" stroke="#fff" stroke-width="1.100" stroke-linejoin="round"/>
<path d="M1261.500 745.500c1.300 1.700 1.300 4.300 0 6M1264 743.500c2.200 2.900 2.200 7.100 0 10M1266.300 741.800c3 4 3 9.400 0 13.400" fill="none" stroke="#fff" stroke-width="1.100" stroke-linecap="round"/>
</svg>
<!-- show desktop -->
<div class="abs" style="left:1351px;top:729px;width:15px;height:39px;border-left:1px solid #6a6a6a;background:linear-gradient(180deg,#c8c8c8 0,#a4a4a4 40%,#8c8c8c 100%);box-shadow:inset 1px 1px 0 rgba(255,255,255,.55)"></div>

<span class=t style="left:28.5px;top:8.14px;font-size:12px;line-height:14px;color:#000;font-weight:400;transform:scaleX(0.9594);">SpectraLAB - FFT Spectral Analysis System</span>
<span class=t style="left:15px;top:32.84px;font-size:12px;line-height:14px;color:#000;font-weight:400;transform:scaleX(0.9460);">File</span>
<span class=t style="left:46.5px;top:32.84px;font-size:12px;line-height:14px;color:#000;font-weight:400;transform:scaleX(0.9426);">Edit</span>
<span class=t style="left:81px;top:32.84px;font-size:12px;line-height:14px;color:#000;font-weight:400;transform:scaleX(1.0489);">Mode</span>
<span class=t style="left:125.5px;top:32.84px;font-size:12px;line-height:14px;color:#000;font-weight:400;transform:scaleX(0.9691);">View</span>
<span class=t style="left:165px;top:32.84px;font-size:12px;line-height:14px;color:#000;font-weight:400;transform:scaleX(1.0155);">Options</span>
<span class=t style="left:221px;top:32.84px;font-size:12px;line-height:14px;color:#000;font-weight:400;transform:scaleX(1.0111);">Utilities</span>
<span class=t style="left:274px;top:32.84px;font-size:12px;line-height:14px;color:#000;font-weight:400;transform:scaleX(1.0350);">Config</span>
<span class=t style="left:324px;top:32.84px;font-size:12px;line-height:14px;color:#000;font-weight:400;transform:scaleX(0.9474);">License</span>
<span class=t style="left:376.5px;top:32.84px;font-size:12px;line-height:14px;color:#000;font-weight:400;transform:scaleX(1.0354);">Window</span>
<span class=t style="left:434.5px;top:32.84px;font-size:12px;line-height:14px;color:#000;font-weight:400;">Help</span>
<span class=t style="left:23px;top:67.84px;font-size:12px;line-height:14px;color:#000;font-weight:400;transform:scaleX(0.9532);"><u>R</u>un</span>
<span class=t style="left:64px;top:68.84px;font-size:12px;line-height:14px;color:#000;font-weight:400;transform:scaleX(0.9311);"><u>S</u>top</span>
<span class=t style="left:123px;top:60.84px;font-size:12px;line-height:14px;color:#000;font-weight:400;transform:scaleX(0.9455);">Avg:</span>
<span class=t style="left:155px;top:61.34px;font-size:12px;line-height:14px;color:#000;font-weight:400;transform:scaleX(0.9731);">15</span>
<span class=t style="left:259px;top:60.84px;font-size:12px;line-height:14px;color:#000;font-weight:400;transform:scaleX(1.0474);">Peak Hold</span>
<span class=t style="left:39px;top:98.84px;font-size:12px;line-height:14px;color:#000;font-weight:400;transform:scaleX(0.9833);">Spectrum</span>
<span class=t style="left:286.5px;top:125.34px;font-size:12px;line-height:14px;color:#000;font-weight:400;transform:scaleX(1.0326);">Plot Top:</span>
<span class=t style="left:340px;top:125.34px;font-size:12px;line-height:14px;color:#000;font-weight:400;transform:scaleX(1.0138);">-29.10</span>
<span class=t style="left:404.5px;top:125.34px;font-size:12px;line-height:14px;color:#000;font-weight:400;transform:scaleX(1.0284);">Plot Range:</span>
<span class=t style="left:474px;top:125.34px;font-size:12px;line-height:14px;color:#000;font-weight:400;transform:scaleX(1.0060);">60.0</span>
<span class=t style="left:626px;top:149.84px;font-size:12px;line-height:14px;color:#000;font-weight:400;transform:scaleX(1.0285);">Left Channel</span>
<span class=t style="left:642px;top:683.84px;font-size:12px;line-height:14px;color:#000;font-weight:400;">Frequency (Hz)</span>
<span class=t style="left:43px;top:161.14px;font-size:12px;line-height:14px;color:#000;font-weight:400;">-29.1</span>
<span class=t style="left:43px;top:244.14px;font-size:12px;line-height:14px;color:#000;font-weight:400;">-39.1</span>
<span class=t style="left:43px;top:327.14px;font-size:12px;line-height:14px;color:#000;font-weight:400;">-49.1</span>
<span class=t style="left:43px;top:411.14px;font-size:12px;line-height:14px;color:#000;font-weight:400;">-59.1</span>
<span class=t style="left:43px;top:494.14px;font-size:12px;line-height:14px;color:#000;font-weight:400;">-69.1</span>
<span class=t style="left:43px;top:578.14px;font-size:12px;line-height:14px;color:#000;font-weight:400;">-79.1</span>
<span class=t style="left:43px;top:662.14px;font-size:12px;line-height:14px;color:#000;font-weight:400;">-89.1</span>
<span class=t style="left:74.8px;top:671.84px;font-size:12px;line-height:14px;color:#000;font-weight:400;">30</span>
<span class=t style="left:125.8px;top:671.84px;font-size:12px;line-height:14px;color:#000;font-weight:400;">40</span>
<span class=t style="left:165.8px;top:671.84px;font-size:12px;line-height:14px;color:#000;font-weight:400;">50</span>
<span class=t style="left:197.8px;top:671.84px;font-size:12px;line-height:14px;color:#000;font-weight:400;">60</span>
<span class=t style="left:247.8px;top:671.84px;font-size:12px;line-height:14px;color:#000;font-weight:400;">80</span>
<span class=t style="left:284.5px;top:671.84px;font-size:12px;line-height:14px;color:#000;font-weight:400;">100</span>
<span class=t style="left:406.5px;top:671.84px;font-size:12px;line-height:14px;color:#000;font-weight:400;">200</span>
<span class=t style="left:478.5px;top:671.84px;font-size:12px;line-height:14px;color:#000;font-weight:400;">300</span>
<span class=t style="left:529.5px;top:671.84px;font-size:12px;line-height:14px;color:#000;font-weight:400;">400</span>
<span class=t style="left:568.5px;top:671.84px;font-size:12px;line-height:14px;color:#000;font-weight:400;">500</span>
<span class=t style="left:600.5px;top:671.84px;font-size:12px;line-height:14px;color:#000;font-weight:400;">600</span>
<span class=t style="left:651.5px;top:671.84px;font-size:12px;line-height:14px;color:#000;font-weight:400;">800</span>
<span class=t style="left:689.2px;top:671.84px;font-size:12px;line-height:14px;color:#000;font-weight:400;">1.0k</span>
<span class=t style="left:811.2px;top:671.84px;font-size:12px;line-height:14px;color:#000;font-weight:400;">2.0k</span>
<span class=t style="left:883.2px;top:671.84px;font-size:12px;line-height:14px;color:#000;font-weight:400;">3.0k</span>
<span class=t style="left:934.2px;top:671.84px;font-size:12px;line-height:14px;color:#000;font-weight:400;">4.0k</span>
<span class=t style="left:973.2px;top:671.84px;font-size:12px;line-height:14px;color:#000;font-weight:400;">5.0k</span>
<span class=t style="left:1005.2px;top:671.84px;font-size:12px;line-height:14px;color:#000;font-weight:400;">6.0k</span>
<span class=t style="left:1056.2px;top:671.84px;font-size:12px;line-height:14px;color:#000;font-weight:400;">8.0k</span>
<span class=t style="left:1091.8px;top:671.84px;font-size:12px;line-height:14px;color:#000;font-weight:400;">10.0k</span>
<span class=t style="left:1214.8px;top:671.84px;font-size:12px;line-height:14px;color:#000;font-weight:400;">20.0k</span>
<span class=t style="left:1272.8px;top:152.84px;font-size:12px;line-height:14px;color:#000;font-weight:400;transform:scaleX(0.9822);"><u>Overlays</u></span>
<span class=t style="left:1285px;top:188.84px;font-size:12px;line-height:14px;color:#e01818;font-weight:400;transform:scaleX(0.9735);">Overlay 1</span>
<span class=t style="left:1255px;top:188.84px;font-size:12px;line-height:14px;color:#000;font-weight:400;">1</span>
<span class=t style="left:1285px;top:204.84px;font-size:12px;line-height:14px;color:#e818e8;font-weight:400;transform:scaleX(0.9735);">Overlay 2</span>
<span class=t style="left:1255px;top:204.84px;font-size:12px;line-height:14px;color:#000;font-weight:400;">2</span>
<span class=t style="left:1285px;top:220.84px;font-size:12px;line-height:14px;color:#1818b8;font-weight:400;transform:scaleX(0.9735);">Overlay 3</span>
<span class=t style="left:1255px;top:220.84px;font-size:12px;line-height:14px;color:#000;font-weight:400;">3</span>
<span class=t style="left:1285px;top:236.84px;font-size:12px;line-height:14px;color:#30e0e8;font-weight:400;transform:scaleX(0.9735);">Overlay 4</span>
<span class=t style="left:1255px;top:236.84px;font-size:12px;line-height:14px;color:#000;font-weight:400;">4</span>
<span class=t style="left:1255px;top:254.84px;font-size:12px;line-height:14px;color:#000;font-weight:400;transform:scaleX(1.0125);">Options...</span>
<span class=t style="left:0px;top:-11.16px;font-size:12px;line-height:14px;color:#000;font-weight:400;left:22.300px;top:493px;letter-spacing:.61px;transform-origin:0 0;transform:rotate(-90deg);">Relative Amplitude (dB)</span>
<span class=t style="left:0px;top:-11.16px;font-size:12px;line-height:14px;color:#000;font-weight:400;left:1253px;top:185px;transform-origin:0 0;transform:rotate(-90deg);">Set</span>
<span class=t style="left:0px;top:-11.16px;font-size:12px;line-height:14px;color:#000;font-weight:400;left:1268px;top:185px;transform-origin:0 0;transform:rotate(-90deg);">On</span>
<span class=t style="left:1128px;top:739.34px;font-size:12px;line-height:14px;color:#fff;font-weight:400;transform:scaleX(0.9597);opacity:.92;">EN</span>
<span class=t style="left:1299.5px;top:733.84px;font-size:12px;line-height:14px;color:#fff;font-weight:400;transform:scaleX(0.8991);">19:19</span>
<span class=t style="left:1285px;top:749.84px;font-size:12px;line-height:14px;color:#fff;font-weight:400;transform:scaleX(0.9157);">25.04.2013</span>
</body></html>
